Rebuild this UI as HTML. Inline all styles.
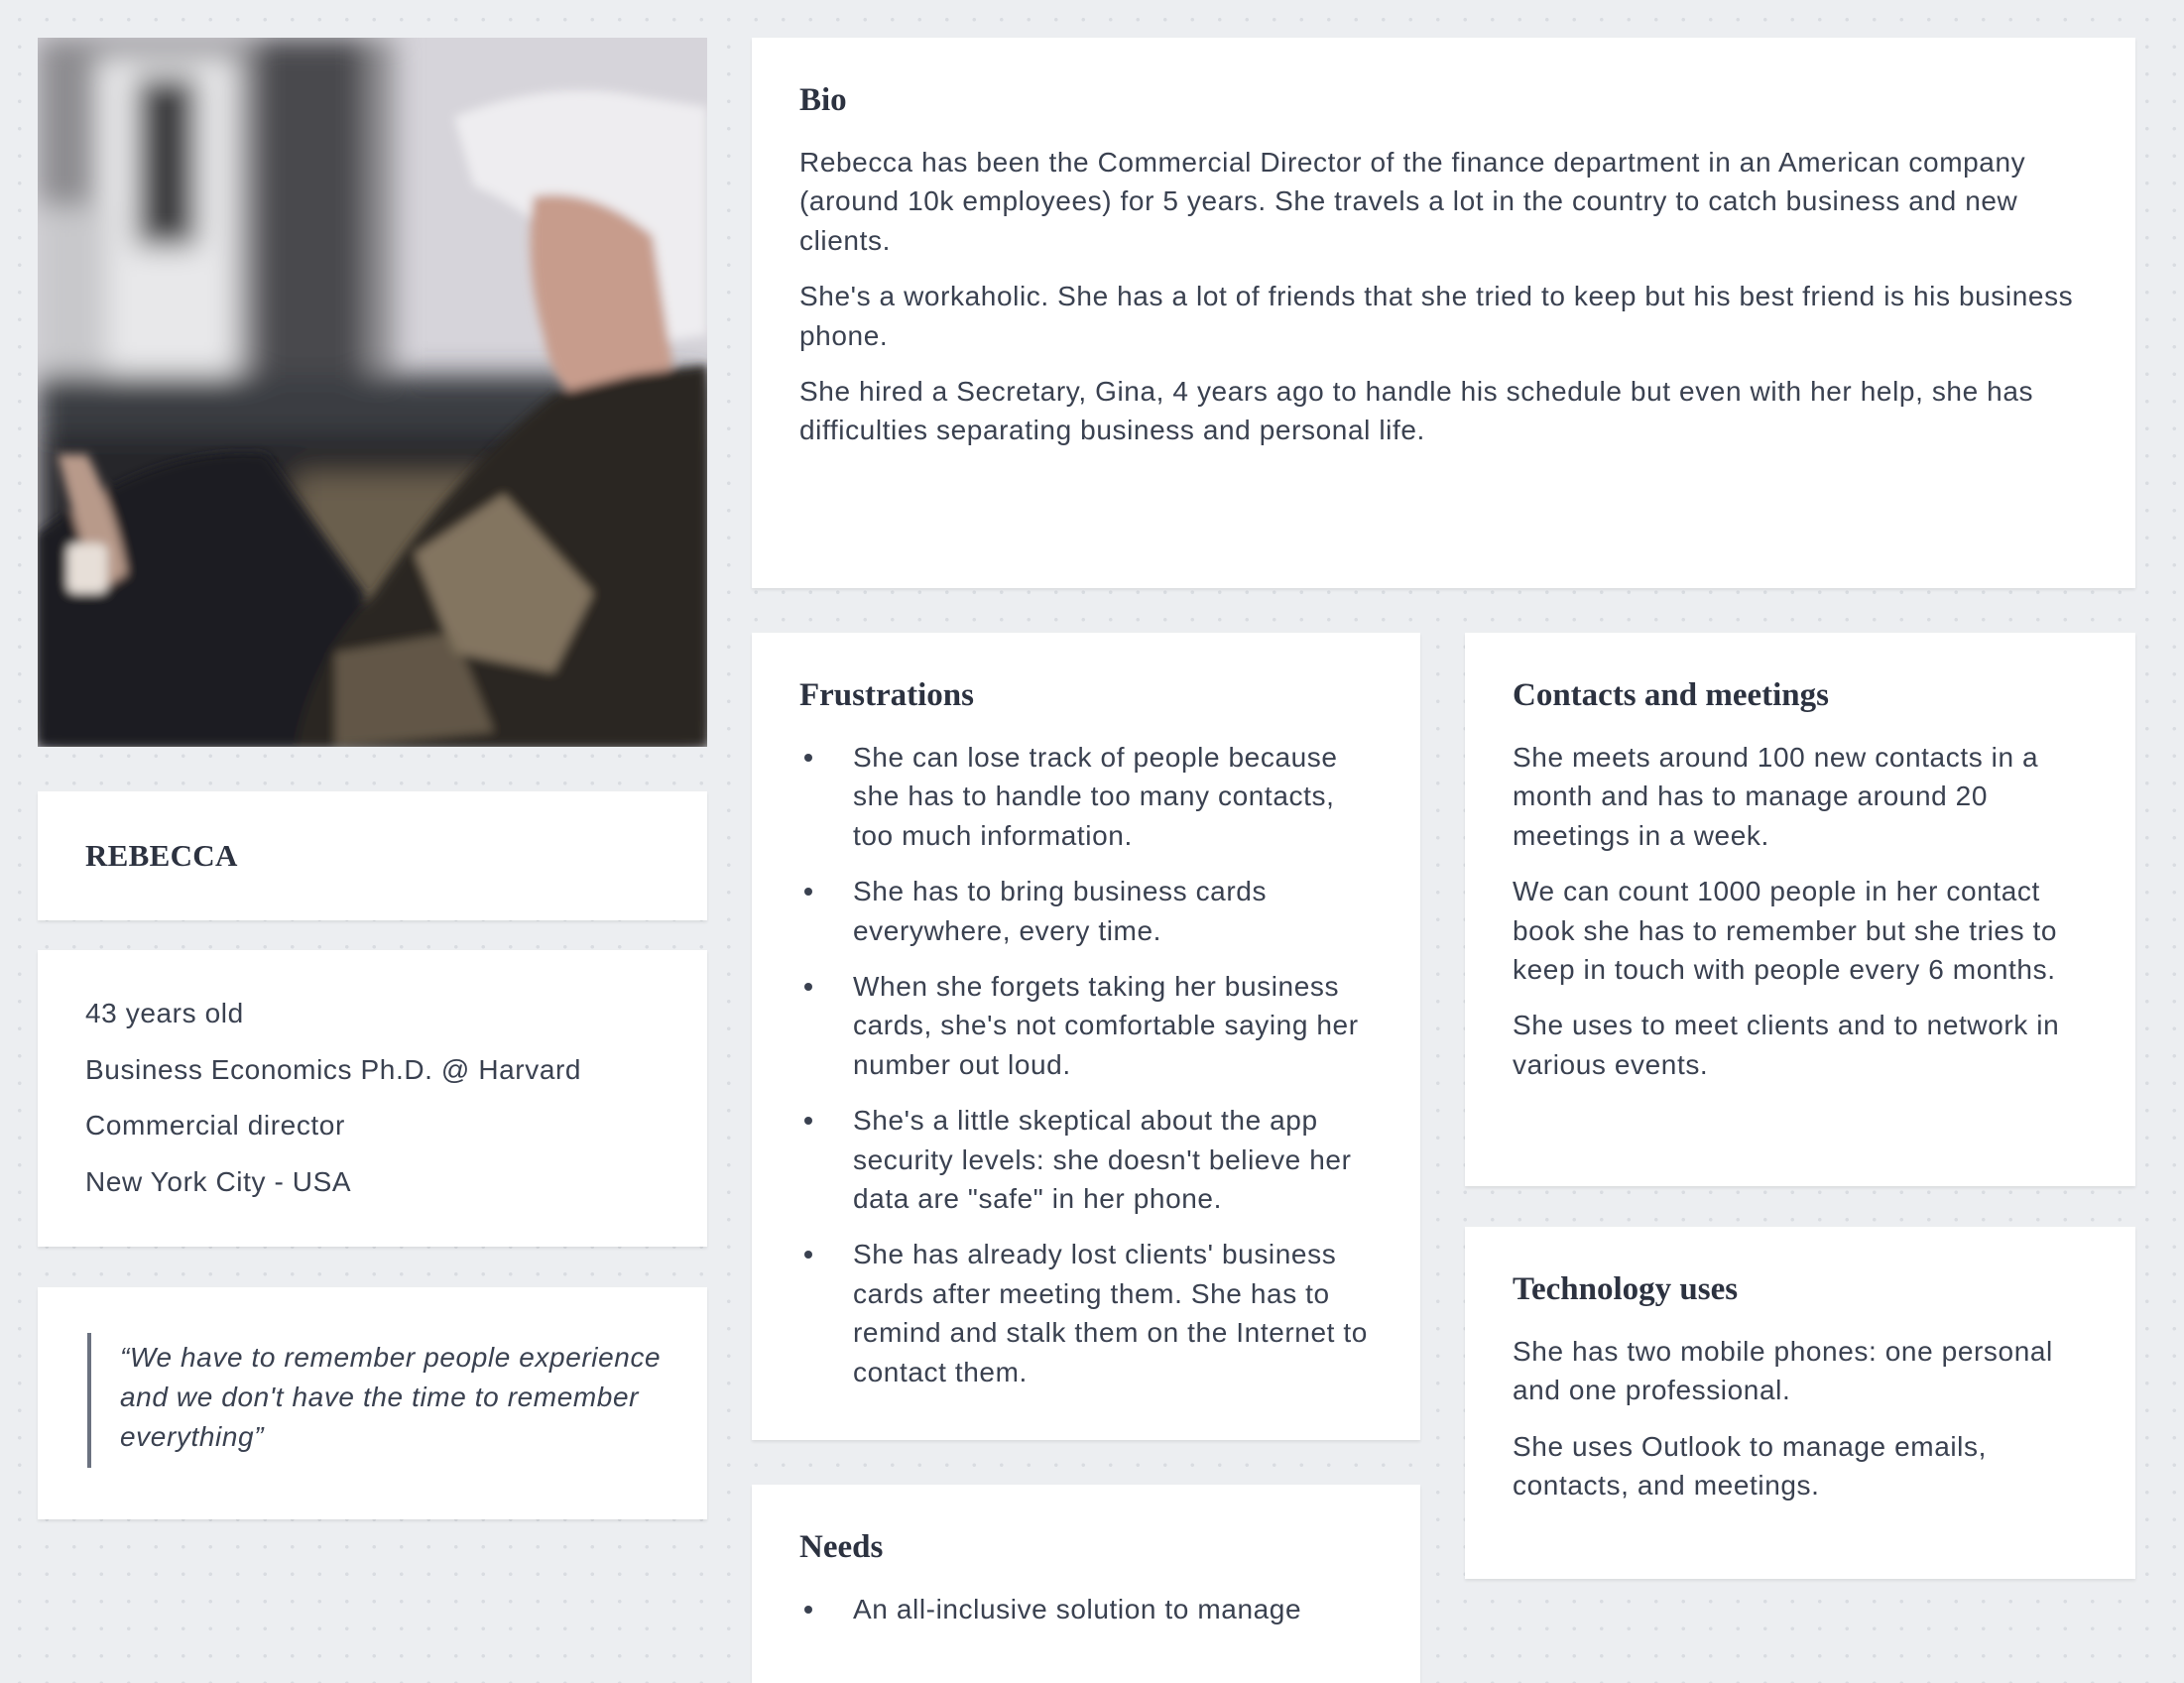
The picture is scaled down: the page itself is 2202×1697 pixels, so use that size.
<!DOCTYPE html>
<html><head><meta charset="utf-8"><style>
*{margin:0;padding:0;box-sizing:border-box}
body{width:2202px;height:1638px;overflow:hidden;background:#eceef1;background-image:radial-gradient(circle,#d9dce1 1.6px,transparent 2px);background-size:27.5px 27.5px;background-position:6px 6px;font-family:"Liberation Sans",sans-serif;color:#3a4150;position:relative}
.card{position:absolute;background:#fff;box-shadow:0 2px 3px rgba(0,0,0,.08);padding:43px 48px}
h2{font-family:"Liberation Serif",serif;font-weight:bold;font-size:33px;line-height:40px;color:#2c3240;margin-bottom:23px}
p{font-size:28px;line-height:39.4px;margin-bottom:17px;letter-spacing:.6px;white-space:nowrap}
ul{list-style:none}
li{position:relative;padding-left:54px;font-size:28px;line-height:39.4px;margin-bottom:17px;letter-spacing:.6px;white-space:nowrap}
li:before{content:"";position:absolute;left:5px;top:16px;width:8px;height:8px;border-radius:50%;background:#3a4150}
</style></head><body>
<div style="position:absolute;left:38px;top:38px;width:675px;height:715px;overflow:hidden;background:#d9d7dd">
<svg width="675" height="715" viewBox="0 0 675 715">
<defs><filter id="b"><feGaussianBlur stdDeviation="14"/></filter><filter id="b2"><feGaussianBlur stdDeviation="5"/></filter></defs>
<rect width="675" height="715" fill="#d6d4da"/>
<g filter="url(#b)">
<rect x="0" y="0" width="360" height="380" fill="#8d8c90"/>
<rect x="60" y="20" width="140" height="330" fill="#e8e8ea"/>
<rect x="100" y="40" width="60" height="170" fill="#3a3a3e"/>
<rect x="220" y="0" width="110" height="380" fill="#4a4a4e"/>
<rect x="0" y="170" width="70" height="200" fill="#c8c8cb"/>
<rect x="0" y="340" width="675" height="70" fill="#3b3c42"/>
<rect x="0" y="400" width="675" height="315" fill="#26272c"/>
<rect x="260" y="440" width="200" height="160" fill="#6b5f4e"/>
</g>
<g filter="url(#b2)">
<path d="M0 500 Q120 410 230 420 L330 560 L300 715 L0 715Z" fill="#1b1c22"/>
<path d="M420 80 Q520 40 610 60 L675 70 L675 300 L600 310 Q540 240 520 200 Q470 160 440 150Z" fill="#eeedf0"/>
<path d="M500 160 Q560 150 620 200 L640 330 Q600 380 560 370 Q520 360 510 300 Q490 230 500 160Z" fill="#c79c8c"/>
<path d="M520 360 L600 340 L675 330 L675 715 L260 715 Q280 620 340 560 Q420 440 520 360Z" fill="#2a2620"/>
<path d="M380 520 L470 460 L560 560 L520 640 L420 620Z" fill="#9a8a70" opacity=".8"/>
<path d="M300 620 L420 600 L460 700 L300 715Z" fill="#7a6c58" opacity=".7"/>
<path d="M20 420 Q40 500 60 560 L90 540 Q80 480 50 420Z" fill="#b89a8a"/>
<rect x="30" y="510" width="40" height="50" rx="8" fill="#e7dfd8"/>
</g>
</svg></div>

<div class="card" style="left:758px;top:38px;width:1395px;height:555px">
<h2>Bio</h2>
<p>Rebecca has been the Commercial Director of the finance department in an American company<br>(around 10k employees) for 5 years. She travels a lot in the country to catch business and new<br>clients.</p>
<p>She's a workaholic. She has a lot of friends that she tried to keep but his best friend is his business<br>phone.</p>
<p>She hired a Secretary, Gina, 4 years ago to handle his schedule but even with her help, she has<br>difficulties separating business and personal life.</p>
</div>

<div class="card" style="left:38px;top:798px;width:675px;height:130px;padding:0 48px;display:flex;align-items:center">
<div style="font-family:'Liberation Serif',serif;font-weight:bold;font-size:31px;letter-spacing:.3px;color:#2c3240">REBECCA</div></div>

<div class="card" style="left:38px;top:958px;width:675px;height:299px;padding:44px 48px">
<p style="line-height:40px;margin-bottom:16.5px">43 years old</p>
<p style="line-height:40px;margin-bottom:16.5px">Business Economics Ph.D. @ Harvard</p>
<p style="line-height:40px;margin-bottom:16.5px">Commercial director</p>
<p style="line-height:40px;margin-bottom:16.5px">New York City - USA</p>
</div>

<div class="card" style="left:38px;top:1298px;width:675px;height:234px;padding:0">
<div style="position:absolute;left:50px;top:46px;width:4px;height:136px;background:#6b7280"></div>
<p style="position:absolute;left:83px;top:51px;font-style:italic;line-height:40px">“We have to remember people experience<br>and we don't have the time to remember<br>everything”</p>
</div>

<div class="card" style="left:758px;top:638px;width:674px;height:814px">
<h2>Frustrations</h2>
<ul>
<li>She can lose track of people because<br>she has to handle too many contacts,<br>too much information.</li>
<li>She has to bring business cards<br>everywhere, every time.</li>
<li>When she forgets taking her business<br>cards, she's not comfortable saying her<br>number out loud.</li>
<li>She's a little skeptical about the app<br>security levels: she doesn't believe her<br>data are "safe" in her phone.</li>
<li>She has already lost clients' business<br>cards after meeting them. She has to<br>remind and stalk them on the Internet to<br>contact them.</li>
</ul></div>

<div class="card" style="left:758px;top:1497px;width:674px;height:200px">
<h2>Needs</h2>
<ul><li>An all-inclusive solution to manage</li></ul>
</div>

<div class="card" style="left:1477px;top:638px;width:676px;height:558px">
<h2>Contacts and meetings</h2>
<p>She meets around 100 new contacts in a<br>month and has to manage around 20<br>meetings in a week.</p>
<p>We can count 1000 people in her contact<br>book she has to remember but she tries to<br>keep in touch with people every 6 months.</p>
<p>She uses to meet clients and to network in<br>various events.</p>
</div>

<div class="card" style="left:1477px;top:1237px;width:676px;height:355px">
<h2>Technology uses</h2>
<p>She has two mobile phones: one personal<br>and one professional.</p>
<p>She uses Outlook to manage emails,<br>contacts, and meetings.</p>
</div>
</body></html>
